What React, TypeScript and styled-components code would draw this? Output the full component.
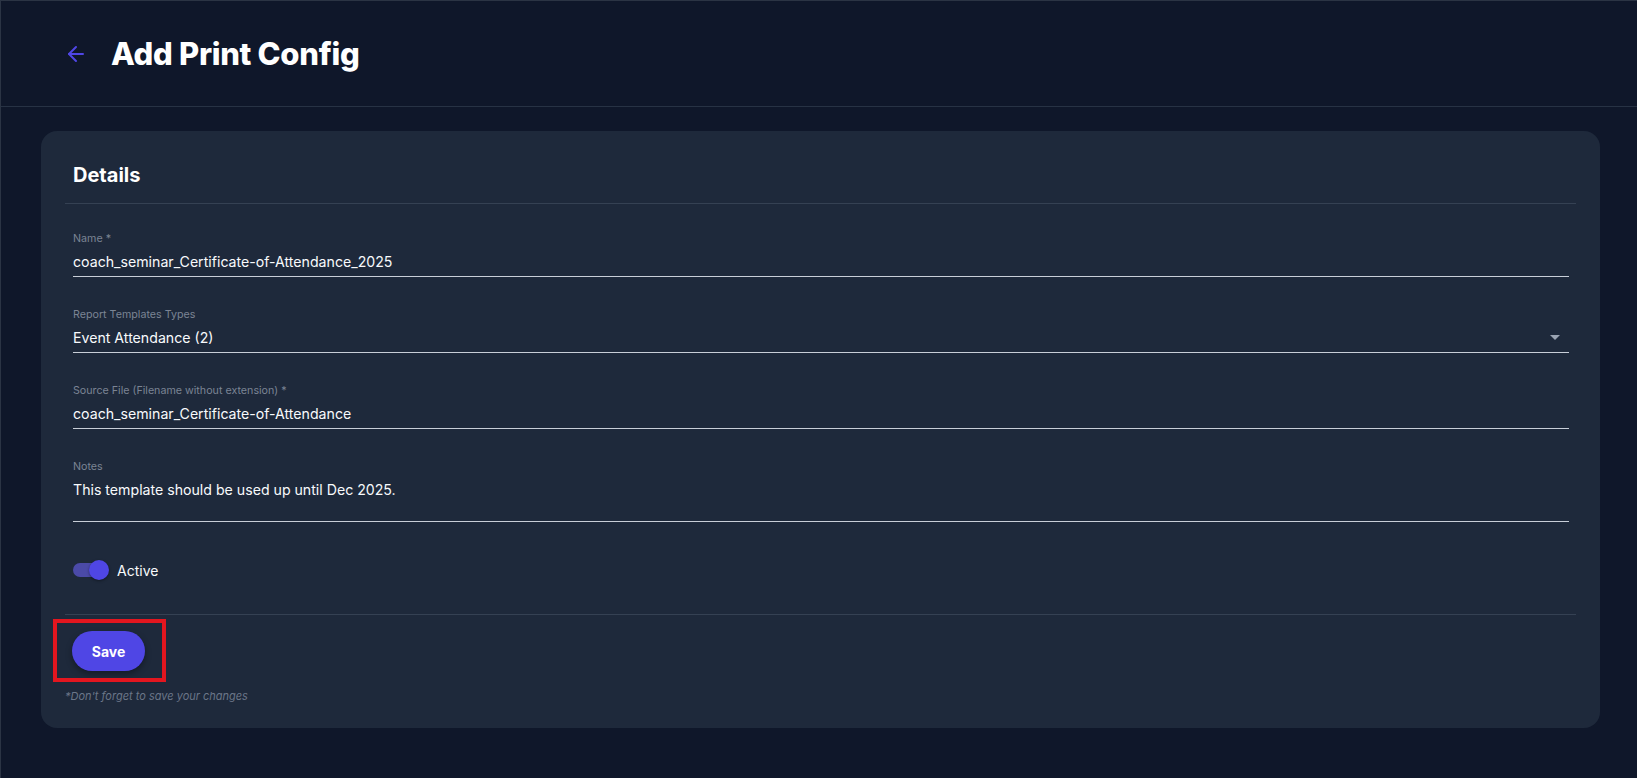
import React from "react";
import styled, { createGlobalStyle } from "styled-components";
import { ArrowLeft } from "lucide-react";

const GlobalStyle = createGlobalStyle`
  html, body { margin: 0; padding: 0; background: #0f172a; }
  body { font-family: Inter, "Noto Sans", sans-serif; color: #f1f5f9; }
  * { box-sizing: border-box; }
`;

const Page = styled.div`
  min-height: 778px;
  border-top: 1px solid #2b3444;
  border-left: 1px solid #2b3444;
  background: #0f172a;
`;

const Header = styled.header`
  height: 106px;
  display: flex;
  align-items: center;
  gap: 22px;
  padding: 0 0 0 62px;
  border-bottom: 1px solid #273244;
`;

const BackButton = styled.button`
  display: flex;
  align-items: center;
  justify-content: center;
  width: 26px;
  height: 26px;
  padding: 0;
  border: none;
  background: transparent;
  color: #4f46e5;
  cursor: pointer;
`;

const Title = styled.h1`
  margin: 0;
  font-size: 31px;
  font-weight: 800;
  letter-spacing: -0.3px;
  color: #ffffff;
`;

const Main = styled.main`
  padding: 24px 37px 40px 40px;
`;

const Card = styled.section`
  background: #1e293b;
  border-radius: 16px;
  padding-bottom: 24px;
`;

const CardHeader = styled.div`
  margin: 0 24px;
  padding: 30px 8px 14px;
  border-bottom: 1px solid #354153;
`;

const CardTitle = styled.h2`
  margin: 0;
  font-size: 20px;
  line-height: 28px;
  font-weight: 700;
  color: #ffffff;
`;

const Form = styled.div`
  padding: 27px 31px 32px 32px;
  display: flex;
  flex-direction: column;
`;

const Field = styled.div<{ $gap?: number }>`
  margin-top: ${(p) => p.$gap ?? 30}px;
  &:first-child { margin-top: 0; }
`;

const Label = styled.div`
  font-size: 10.7px;
  line-height: 16px;
  color: #7b8494;
  margin-bottom: 3px;
`;

const Value = styled.div<{ $minHeight?: number }>`
  display: flex;
  align-items: flex-start;
  justify-content: space-between;
  min-height: ${(p) => p.$minHeight ?? 26}px;
  padding-bottom: 2px;
  border-bottom: 1px solid #c8ced8;
  font-size: 14.15px;
  line-height: 24px;
  color: #f8fafc;
`;

const Caret = styled.span`
  width: 0;
  height: 0;
  margin: 9px 9px 0 0;
  border-left: 5px solid transparent;
  border-right: 5px solid transparent;
  border-top: 5px solid #9aa3b2;
`;

const ToggleRow = styled.label`
  margin-top: 36px;
  display: flex;
  align-items: center;
  gap: 8px;
  height: 24px;
  font-size: 14px;
  color: #f8fafc;
`;

const Switch = styled.span<{ $on: boolean }>`
  position: relative;
  width: 36px;
  height: 24px;
  display: inline-flex;
  align-items: center;
  &::before {
    content: "";
    width: 34px;
    height: 14px;
    border-radius: 7px;
    background: ${(p) => (p.$on ? "#4b4aa8" : "#64748b")};
  }
  &::after {
    content: "";
    position: absolute;
    top: 2px;
    left: ${(p) => (p.$on ? 16 : 0)}px;
    width: 20px;
    height: 20px;
    border-radius: 50%;
    background: ${(p) => (p.$on ? "#4f46e5" : "#e2e8f0")};
    box-shadow: 0 1px 3px rgba(0, 0, 0, 0.4);
  }
`;

const Footer = styled.div`
  margin: 0 24px;
  padding: 16px 0 0 7px;
  border-top: 1px solid #354153;
`;

const Highlight = styled.div`
  position: relative;
  display: inline-block;
  &::after {
    content: "";
    position: absolute;
    left: -19px;
    top: -12px;
    right: -21px;
    bottom: -11px;
    border: 4px solid #e3161f;
    pointer-events: none;
  }
`;

const SaveButton = styled.button`
  display: block;
  width: 73px;
  height: 40px;
  border: none;
  border-radius: 20px;
  background: #4f46e5;
  color: #ffffff;
  font-family: Inter, sans-serif;
  font-size: 14px;
  font-weight: 700;
  box-shadow: 0 3px 6px rgba(0, 0, 0, 0.35);
  cursor: pointer;
`;

const Note = styled.p`
  margin: 17px 0 0 -7px;
  font-size: 11px;
  line-height: 16px;
  font-style: italic;
  color: #6b7688;
`;

export default function App() {
  return (
    <>
      <GlobalStyle />
      <Page>
        <Header>
          <BackButton aria-label="Back">
            <ArrowLeft size={24} strokeWidth={2} />
          </BackButton>
          <Title>Add Print Config</Title>
        </Header>
        <Main>
          <Card>
            <CardHeader>
              <CardTitle>Details</CardTitle>
            </CardHeader>
            <Form>
              <Field>
                <Label>Name *</Label>
                <Value>coach_seminar_Certificate-of-Attendance_2025</Value>
              </Field>
              <Field>
                <Label>Report Templates Types</Label>
                <Value>
                  <span>Event Attendance (2)</span>
                  <Caret />
                </Value>
              </Field>
              <Field>
                <Label>Source File (Filename without extension) *</Label>
                <Value>coach_seminar_Certificate-of-Attendance</Value>
              </Field>
              <Field>
                <Label>Notes</Label>
                <Value $minHeight={44}>This template should be used up until Dec 2025.</Value>
              </Field>
              <ToggleRow>
                <Switch $on />
                Active
              </ToggleRow>
            </Form>
            <Footer>
              <Highlight>
                <SaveButton>Save</SaveButton>
              </Highlight>
              <Note>*Don't forget to save your changes</Note>
            </Footer>
          </Card>
        </Main>
      </Page>
    </>
  );
}
